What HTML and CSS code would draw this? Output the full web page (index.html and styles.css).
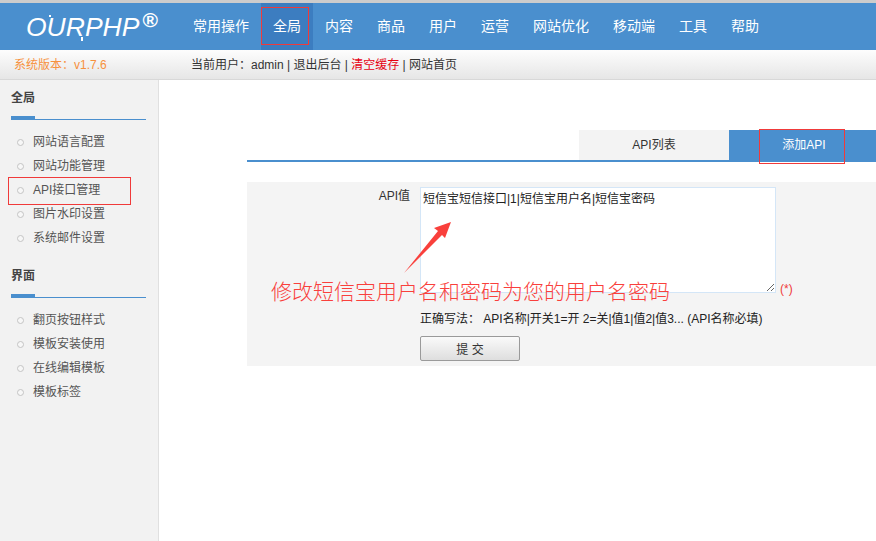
FILE: index.html
```html
<!DOCTYPE html>
<html lang="zh-CN">
<head>
  <meta charset="UTF-8">
  <title>OURPHP</title>
  <link rel="stylesheet" href="styles.css">
</head>
<body>
  <div class="header">
    <div class="logo">OURPHP<sup class="reg">®</sup></div>
    <div class="nav">
      <a class="nav-item">常用操作</a>
      <a class="nav-item active">全局</a>
      <a class="nav-item">内容</a>
      <a class="nav-item">商品</a>
      <a class="nav-item">用户</a>
      <a class="nav-item">运营</a>
      <a class="nav-item">网站优化</a>
      <a class="nav-item">移动端</a>
      <a class="nav-item">工具</a>
      <a class="nav-item">帮助</a>
    </div>
  </div>

  <div class="subbar">
    <div class="version">系统版本：v1.7.6</div>
    <div class="userinfo">当前用户：admin | 退出后台 | <span class="red">清空缓存</span> | 网站首页</div>
  </div>

  <div class="main">
    <div class="sidebar">
      <div class="side-title">全局</div>
      <ul class="side-list">
        <li>网站语言配置</li>
        <li>网站功能管理</li>
        <li class="marked">API接口管理</li>
        <li>图片水印设置</li>
        <li>系统邮件设置</li>
      </ul>
      <div class="side-title">界面</div>
      <ul class="side-list">
        <li>翻页按钮样式</li>
        <li>模板安装使用</li>
        <li>在线编辑模板</li>
        <li>模板标签</li>
      </ul>
    </div>

    <div class="content">
      <div class="tabs">
        <div class="tab">API列表</div>
        <div class="tab tab-on">添加API</div>
      </div>

      <div class="panel">
        <div class="field">
          <label class="field-label">API值</label>
          <div class="field-body">
            <div class="input-row">
              <textarea class="api-input">短信宝短信接口|1|短信宝用户名|短信宝密码</textarea>
              <span class="must">(*)</span>
            </div>
            <p class="hint">正确写法： API名称|开关1=开 2=关|值1|值2|值3... (API名称必填)</p>
            <button class="submit">提 交</button>
          </div>
        </div>
      </div>
    </div>
  </div>

  <!-- annotation drawn over the page -->
  <svg class="arrow" width="60" height="64" viewBox="0 0 60 64">
    <path d="M0 61 L34 19 L30 16 L47 10 L41 26 L38 23 Z" fill="#f9403c"/>
  </svg>
  <div class="note">修改短信宝用户名和密码为您的用户名密码</div>
</body>
</html>
```

FILE: styles.css
```css
*, *::before, *::after {
  box-sizing: border-box;
}
html, body {
  height: 100%;
}
body {
  margin: 0;
  overflow: hidden;
  font-family: "Liberation Sans", "Noto Sans CJK SC", sans-serif;
  font-size: 12px;
  color: #333;
  background: #fff;
  display: flex;
  flex-direction: column;
}
.header {
  height: 50px;
  flex: none;
  display: flex;
  background: #4a8fce;
  border-top: 3px solid #ccc;
}
.logo {
  position: relative;
  width: 181px;
  padding: 6px 0 0 26px;
  font-size: 26.5px;
  font-style: italic;
  color: #fff;
  line-height: 36px;
}
/* small marks on the U and the R of the logo */
.logo::before {
  content: "";
  position: absolute;
  left: 49px;
  top: 12px;
  width: 2px;
  height: 2px;
  background: #fff;
}
.logo::after {
  content: "";
  position: absolute;
  left: 81px;
  top: 34px;
  width: 2px;
  height: 4px;
  background: #fff;
}
.reg {
  margin-left: 3px;
  font-size: 21px;
  font-style: normal;
  font-weight: bold;
  line-height: 0;
  vertical-align: 9px;
}
.nav {
  display: flex;
}
.nav-item {
  padding: 0 12px;
  font-size: 14px;
  line-height: 47px;
  color: #fff;
}
.active {
  position: relative;
  background: #3c7dc0;
}
.active::after {
  content: "";
  position: absolute;
  left: 0;
  top: 4px;
  width: 48px;
  height: 38px;
  border: 1px solid #f03a3a;
}
.subbar {
  height: 30px;
  flex: none;
  display: flex;
  align-items: center;
  background: linear-gradient(#fdfdfd, #e6e6e6);
  border-bottom: 1px solid #d8d8d8;
  line-height: 28px;
}
.version {
  width: 191px;
  padding-left: 14px;
  color: #f7913d;
}
.userinfo {
  color: #333;
}
.red {
  color: #e60012;
}
.main {
  flex: 1;
  display: flex;
}
.sidebar {
  width: 159px;
  flex: none;
  padding: 0 12px 0 11px;
  background: #f2f2f2;
  border-right: 1px solid #e0e0e0;
}
.side-title {
  height: 40px;
  padding-top: 9px;
  font-weight: bold;
  color: #444;
  line-height: 18px;
  border-bottom: 1px solid #4a8fce;
  position: relative;
}
.side-title::after {
  content: "";
  position: absolute;
  left: 0;
  bottom: -1px;
  width: 24px;
  height: 4px;
  background: #4a8fce;
}
.side-list {
  list-style: none;
  margin: 0;
  padding: 10px 0 8px;
}
.side-list li {
  height: 24px;
  line-height: 24px;
  padding-left: 22px;
  color: #555;
  position: relative;
}
.side-list li::before {
  content: "";
  position: absolute;
  left: 6px;
  top: 9px;
  width: 7px;
  height: 7px;
  border: 1px solid #c4c4c4;
  border-radius: 50%;
  background: #f7f7f7;
}
.marked::after {
  content: "";
  position: absolute;
  left: -3px;
  top: -1px;
  width: 123px;
  height: 28px;
  border: 1px solid #f03a3a;
}
.content {
  flex: 1;
  min-width: 0;
  padding: 50px 0 0 88px;
}
.tabs {
  display: flex;
  justify-content: flex-end;
  height: 32px;
  border-bottom: 2px solid #4a8fce;
}
.tab {
  width: 150px;
  height: 30px;
  line-height: 30px;
  text-align: center;
  background: #f3f3f3;
  color: #333;
}
.tab-on {
  width: 147px;
  padding-left: 3px;
  background: #4a8fce;
  color: #fff;
  position: relative;
}
.tab-on::after {
  content: "";
  position: absolute;
  left: 30px;
  top: -1px;
  width: 86px;
  height: 35px;
  border: 1px solid #f03a3a;
}
.panel {
  margin-top: 20px;
  height: 184px;
  padding-top: 5px;
  background: #f4f4f4;
}
.field {
  display: flex;
}
.field-label {
  width: 165px;
  padding-right: 2px;
  text-align: right;
  line-height: 18px;
  color: #333;
}
.field-body {
  flex: 1;
  padding-left: 8px;
}
.input-row {
  display: flex;
  align-items: flex-end;
}
.api-input {
  display: block;
  width: 356px;
  height: 106px;
  margin: 0;
  padding: 3px 2px;
  font-family: inherit;
  font-size: 12px;
  line-height: 17px;
  color: #222;
  background: #fff;
  border: 1px solid #d4e6f7;
  border-radius: 0;
  outline: none;
}
.must {
  margin: 0 0 -4px 4px;
  color: #f03a3a;
  line-height: 16px;
}
.hint {
  margin: 18px 0 0;
  line-height: 17px;
  color: #222;
}
.submit {
  display: block;
  width: 100px;
  height: 25px;
  margin-top: 8px;
  padding: 0;
  font-family: inherit;
  font-size: 12px;
  color: #333;
  background: linear-gradient(#fafafa, #dedede);
  border: 1px solid #9a9a9a;
  border-radius: 2px;
}
.arrow {
  position: absolute;
  left: 404px;
  top: 212px;
}
.note {
  position: absolute;
  left: 271px;
  top: 279px;
  font-size: 21px;
  font-weight: 300;
  line-height: 26px;
  color: #f9403c;
  white-space: nowrap;
}
```
